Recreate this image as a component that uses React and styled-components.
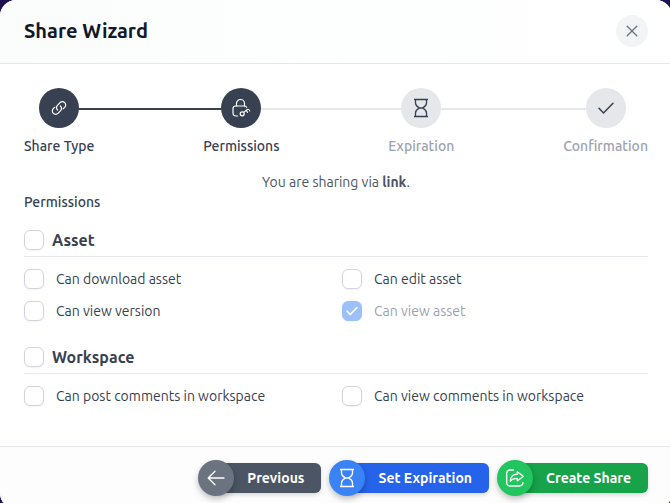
import React, { useState } from 'react'
import styled, { createGlobalStyle, css } from 'styled-components'

const GlobalStyle = createGlobalStyle`
  * {
    box-sizing: border-box;
  }
  body {
    margin: 0;
    overflow: hidden;
    background: #1e1250;
    color: #374151;
    font-family: Ubuntu, 'Noto Sans', sans-serif;
    font-size: 14px;
    line-height: 20px;
  }
  button,
  input {
    font: inherit;
  }
`

const Dialog = styled.main`
  margin-right: -2px;
  border-radius: 16px;
  overflow: hidden;
  background: white;
`
const Header = styled.header`
  display: flex;
  align-items: center;
  justify-content: space-between;
  height: 64px;
  padding: 0 24px 2px;
  border-bottom: 1px solid #e5e7eb;
  background: linear-gradient(to right, #fbfdfd, #ffffff);
`
const Title = styled.h1`
  margin: 0;
  color: #111827;
  font-size: 20px;
  font-weight: 600;
  line-height: 28px;
`
const CloseButton = styled.button`
  display: grid;
  place-items: center;
  width: 32px;
  height: 32px;
  padding: 0;
  border: 0;
  border-radius: 50%;
  background: #f3f4f6;
  color: #6b7280;
`
const Content = styled.div`
  padding: 24px 24px 40px;
`

const Steps = styled.ol`
  display: flex;
  margin: 0;
  padding: 0;
  list-style: none;
`
const Step = styled.li`
  display: flex;
  flex-direction: column;
  align-items: center;
  gap: 8px;
  color: ${props => (props.$done ? '#374151' : '#9ca3af')};
  font-weight: 500;
`
const StepCircle = styled.span`
  display: grid;
  place-items: center;
  width: 40px;
  height: 40px;
  border-radius: 50%;
  background: ${props => (props.$done ? '#374151' : '#e5e7eb')};
  color: ${props => (props.$done ? '#ffffff' : '#374151')};
  z-index: 1;
`
const Connector = styled.li`
  flex: 1;
  height: 2px;
  margin: 20px -24px 0;
  background: ${props => (props.$done ? '#374151' : '#e5e7eb')};
`

const Summary = styled.p`
  margin: 16px 0 0;
  color: #4b5563;
  text-align: center;
`
const Strong = styled.strong`
  font-weight: 600;
`
const SectionTitle = styled.h2`
  margin: 0;
  font-size: 14px;
  font-weight: 500;
`
const Group = styled.section`
  margin-top: ${props => (props.$first ? '16px' : '24px')};
`
const GroupHeader = styled.div`
  padding: 2px 0 6px;
  border-bottom: 1px solid #e5e7eb;
  font-size: 16px;
  font-weight: 600;
`
const Options = styled.div`
  display: grid;
  grid-template-columns: 1fr 1fr;
  gap: 12px;
  padding-top: 12px;
`
const CheckLabel = styled.label`
  display: flex;
  align-items: center;
  gap: ${props => (props.$heading ? '8px' : '12px')};
  color: ${props => (props.$disabled ? '#9ca3af' : 'inherit')};
`
const CheckBox = styled.span`
  display: grid;
  place-items: center;
  flex: none;

  > * {
    grid-area: 1 / 1;
  }
`
const CheckInput = styled.input`
  appearance: none;
  width: 20px;
  height: 20px;
  margin: 0;
  border: 1px solid #d1d5db;
  border-radius: 6px;
  background: white;
  box-shadow: 0 1px 2px rgba(0, 0, 0, 0.05);

  &:checked {
    border-color: #3b82f6;
    background: #3b82f6;
  }
  &:disabled {
    opacity: 0.5;
  }
`
const CheckMark = styled.span`
  display: grid;
  color: white;
  pointer-events: none;
  z-index: 1;
`

const Footer = styled.footer`
  display: flex;
  justify-content: flex-end;
  gap: 8px;
  padding: 13px 24px;
  border-top: 1px solid #e5e7eb;
  background: #fdfdfe;
`
const tones = {
  gray: css`
    --bar: #4b5563;
    --circle: #6b7280;
  `,
  blue: css`
    --bar: #2563eb;
    --circle: #3b82f6;
  `,
  green: css`
    --bar: #16a34a;
    --circle: #22c55e;
  `,
}
const ActionButton = styled.button`
  ${props => tones[props.$tone]}
  display: flex;
  align-items: center;
  padding: 0;
  border: 0;
  background: none;
  color: white;
  font-weight: 600;
`
const ActionIcon = styled.span`
  display: grid;
  place-items: center;
  width: 36px;
  height: 36px;
  border-radius: 50%;
  background: var(--circle);
  box-shadow: 0 3px 6px rgba(0, 0, 0, 0.25);
  z-index: 1;
`
const ActionText = styled.span`
  margin-left: -18px;
  padding: 5px 17px 5px 31px;
  border-radius: 6px;
  background: var(--bar);
  box-shadow: 0 2px 4px rgba(0, 0, 0, 0.15);
`

const Svg = ({ size = 20, width = 1.3, children }) => (
  <svg
    width={size}
    height={size}
    viewBox="0 0 20 20"
    fill="none"
    stroke="currentColor"
    strokeWidth={width}
    strokeLinecap="round"
    strokeLinejoin="round"
    aria-hidden="true"
  >
    {children}
  </svg>
)

const LinkIcon = () => (
  <Svg width={1.2}>
    <path d="M8.6 12a3.3 3.3 0 0 1-.2-4.7l2.6-2.6a3.3 3.3 0 0 1 4.7 0 3.3 3.3 0 0 1 0 4.7l-1.6 1.5" />
    <path d="M11.4 8a3.3 3.3 0 0 1 .2 4.7L9 15.3a3.3 3.3 0 0 1-4.7 0 3.3 3.3 0 0 1 0-4.7l1.6-1.5" />
  </Svg>
)
const LockKeyIcon = () => (
  <Svg width={1.2}>
    <path d="M5.5 8V5.5a4 4 0 0 1 8 0V8" />
    <path d="M15.6 9.4C15.3 8.4 14.5 8 13.4 8H4.6C3 8 2 9 2 10.5v4.3C2 16.8 3 18 5 18h1.6" />
    <circle cx="11.2" cy="15.8" r="2" />
    <path d="M12.7 14.4 16 11.8c1-.8 2.3-.4 2.7 1M15.3 12.5l1.2 1.8" />
  </Svg>
)
const HourglassIcon = () => (
  <Svg>
    <path
      strokeLinecap="butt"
      d="M3 1.5h14M3 18.5h14M4.5 1.5V5c0 3 2 3.9 4 5-2 1.1-4 2-4 5v3.5M15.5 1.5V5c0 3-2 3.9-4 5 2 1.1 4 2 4 5v3.5M8.3 10h3.4"
    />
  </Svg>
)
const CheckIcon = ({ size, width = 1.5 }) => (
  <Svg size={size} width={width}>
    <path d="M3 10.3 7.5 15 17 5.3" />
  </Svg>
)
const CloseIcon = () => (
  <Svg size={12} width={2.2}>
    <path d="M2 2l16 16M18 2l-16 16" />
  </Svg>
)
const ArrowLeftIcon = () => (
  <Svg>
    <path d="M18 10H2.5M9 3.2 2.2 10 9 16.8" />
  </Svg>
)
const ShareIcon = () => (
  <Svg>
    <path d="M8.5 2H5.5C3 2 1.7 3.3 1.7 5.8v8.4C1.7 16.7 3 18 5.5 18h8.7c2.5 0 3.8-1.3 3.8-3.4" />
    <path d="M12.3 3.7 18.3 8.3l-6 4.6v-2.5C9 10.4 7 11 5.2 13.4 5.5 9 8 6.4 12.3 6.2Z" />
  </Svg>
)

const steps = [
  { name: 'Share Type', icon: <LinkIcon />, done: true },
  { name: 'Permissions', icon: <LockKeyIcon />, done: true },
  { name: 'Expiration', icon: <HourglassIcon />, done: false },
  { name: 'Confirmation', icon: <CheckIcon size={20} />, done: false },
]

const groups = [
  {
    name: 'Asset',
    options: [
      { name: 'Can download asset' },
      { name: 'Can edit asset' },
      { name: 'Can view version' },
      { name: 'Can view asset', locked: true },
    ],
  },
  {
    name: 'Workspace',
    options: [
      { name: 'Can post comments in workspace' },
      { name: 'Can view comments in workspace' },
    ],
  },
]

const Check = ({ name, heading, locked }) => {
  const [checked, setChecked] = useState(Boolean(locked))

  return (
    <CheckLabel $heading={heading} $disabled={locked}>
      <CheckBox>
        <CheckInput
          type="checkbox"
          checked={checked}
          disabled={locked}
          onChange={e => setChecked(e.target.checked)}
        />
        {checked && (
          <CheckMark>
            <CheckIcon size={14} width={2.4} />
          </CheckMark>
        )}
      </CheckBox>
      {name}
    </CheckLabel>
  )
}

const Action = ({ tone, icon, children }) => (
  <ActionButton type="button" $tone={tone}>
    <ActionIcon>{icon}</ActionIcon>
    <ActionText>{children}</ActionText>
  </ActionButton>
)

export default function App() {
  return (
    <>
      <GlobalStyle />
      <Dialog>
        <Header>
          <Title>Share Wizard</Title>
          <CloseButton type="button" aria-label="Close">
            <CloseIcon />
          </CloseButton>
        </Header>
        <Content>
          <Steps>
            {steps.map((step, i) => (
              <React.Fragment key={step.name}>
                {i > 0 && <Connector $done={step.done} aria-hidden="true" />}
                <Step $done={step.done}>
                  <StepCircle $done={step.done}>{step.icon}</StepCircle>
                  {step.name}
                </Step>
              </React.Fragment>
            ))}
          </Steps>
          <Summary>
            You are sharing via <Strong>link</Strong>.
          </Summary>
          <SectionTitle>Permissions</SectionTitle>
          {groups.map((group, i) => (
            <Group key={group.name} $first={i === 0}>
              <GroupHeader>
                <Check name={group.name} heading />
              </GroupHeader>
              <Options>
                {group.options.map(option => (
                  <Check key={option.name} {...option} />
                ))}
              </Options>
            </Group>
          ))}
        </Content>
        <Footer>
          <Action tone="gray" icon={<ArrowLeftIcon />}>
            Previous
          </Action>
          <Action tone="blue" icon={<HourglassIcon />}>
            Set Expiration
          </Action>
          <Action tone="green" icon={<ShareIcon />}>
            Create Share
          </Action>
        </Footer>
      </Dialog>
    </>
  )
}
